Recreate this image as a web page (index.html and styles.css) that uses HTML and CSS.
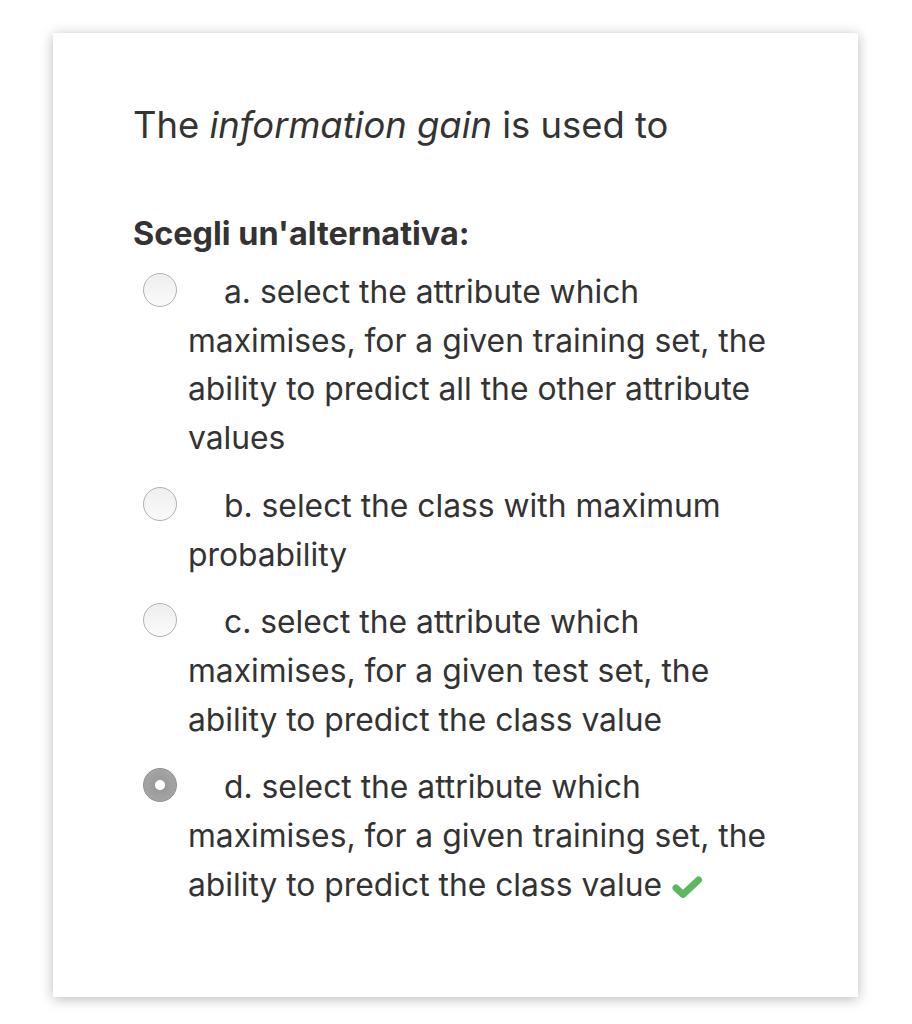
FILE: index.html
```html
<!DOCTYPE html>
<html>
<head>
<meta charset="utf-8">
<link rel="stylesheet" href="styles.css">
</head>
<body>
<div class="card">
  <div class="qtext">The <em>information gain</em> is used to</div>
  <div class="prompt">Scegli un'alternativa:</div>
  <div class="answers">
    <div class="option"><span class="radio"></span><span class="label">a. select the attribute which maximises, for a given training set, the ability to predict all the other attribute values</span></div>
    <div class="option"><span class="radio"></span><span class="label">b. select the class with maximum probability</span></div>
    <div class="option"><span class="radio"></span><span class="label">c. select the attribute which maximises, for a given test set, the ability to predict the class value</span></div>
    <div class="option"><span class="radio checked"></span><span class="label">d. select the attribute which maximises, for a given training set, the ability to predict the class value <svg class="check" viewBox="0 0 32 24" width="32" height="24"><path d="M5 13 L12 19.5 L27.5 5" fill="none" stroke="#5cb85c" stroke-width="7" stroke-linecap="round" stroke-linejoin="round"/></svg></span></div>
  </div>
</div>
</body>
</html>
```
FILE: styles.css
```css
html, body {
  margin: 0;
  padding: 0;
  background: #ffffff;
}
body {
  width: 912px;
  height: 1024px;
  font-family: Inter, "Noto Sans", sans-serif;
  color: #333333;
}
.card {
  margin: 33px 0 0 53px;
  width: 805px;
  height: 964px;
  box-sizing: border-box;
  background: #ffffff;
  box-shadow: 0 2px 12px rgba(0,0,0,0.28);
  padding: 65px 80px 0 80px;
}
.qtext {
  font-size: 36.4px;
  line-height: 54px;
}
.qtext em {
  font-style: italic;
}
.prompt {
  margin-top: 62px;
  font-size: 32.4px;
  font-weight: 700;
  line-height: 40px;
}
.answers {
  margin-top: 14px;
}
.option {
  padding-left: 55px;
  font-size: 31.8px;
  line-height: 48.7px;
  margin-bottom: 19px;
}
.radio {
  display: inline-block;
  width: 34px;
  height: 34px;
  box-sizing: border-box;
  margin-left: -45px;
  margin-right: 47px;
  border-radius: 50%;
  border: 1.5px solid #b0b0b0;
  background: linear-gradient(#eeeeee, #fbfbfb);
  vertical-align: -4px;
}
.radio.checked {
  border: 1.5px solid #8f8f8f;
  background: radial-gradient(circle, #ffffff 0 4.5px, #9a9a9a 5.5px, #a6a6a6 17px);
}
.check {
  vertical-align: -3px;
  margin-left: 0;
}
```
